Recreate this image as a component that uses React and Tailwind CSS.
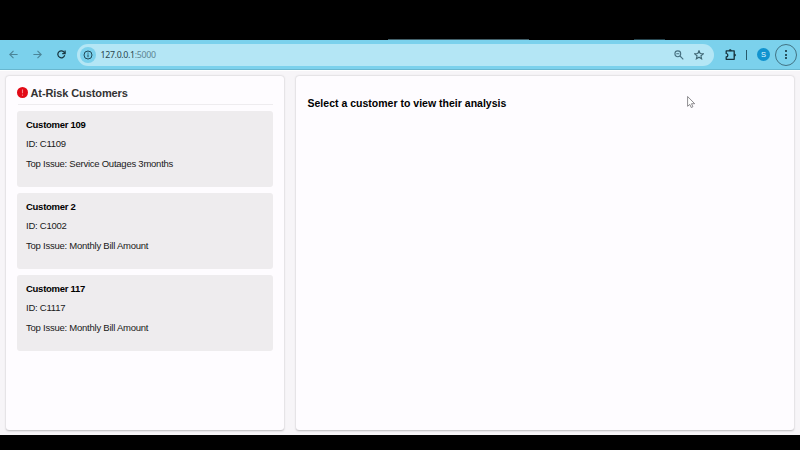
const customers = [
  { name: 'Customer 109', id: 'C1109', issue: 'Service Outages 3months' },
  { name: 'Customer 2', id: 'C1002', issue: 'Monthly Bill Amount' },
  { name: 'Customer 117', id: 'C1117', issue: 'Monthly Bill Amount' },
];

function Arrow({ flip }) {
  return (
    <svg className={flip ? 'h-[9px] w-[9px] rotate-180' : 'h-[9px] w-[9px]'} viewBox="0 0 9 9" fill="none" stroke="#4b8598" strokeWidth="1.1">
      <path d="M8.6 4.5H.9M4.5.8.8 4.5l3.7 3.7" />
    </svg>
  );
}

function BrowserBar() {
  return (
    <header className="flex h-[30px] shrink-0 items-center border-b border-[#68b7cf] bg-[#7bd1ec] pl-[9px] pr-[3px]">
      <Arrow />
      <span className="ml-[15px] flex"><Arrow flip /></span>
      <svg className="ml-[15px] h-[9px] w-[9px]" viewBox="0 0 9 9" fill="none" stroke="#183640" strokeWidth="1.25">
        <path d="M7.7 5.3A3.5 3.5 0 1 1 7.3 2.4L8 3.3" />
        <path d="M8.1.5v3H5.2" />
      </svg>
      <div className="ml-[11px] flex h-[22px] w-[637px] items-center rounded-full bg-[#b4e6f5] pl-[3px] pr-[10px]">
        <span className="flex h-4 w-4 items-center justify-center rounded-full bg-[#7bd1ec]">
          <svg className="h-[10px] w-[10px]" viewBox="0 0 10 10" fill="none" stroke="#254b58" strokeWidth="1">
            <circle cx="5" cy="5" r="4" />
            <path d="M5 4.4v2.8M5 2.6v1" />
          </svg>
        </span>
        <span className="ml-[4.5px] pt-px font-['Noto_Sans',sans-serif] text-[8.8px] leading-none tracking-[-0.33px] text-[#294650]">
          127.0.0.1<span className="text-[#5c8593]">:5000</span>
        </span>
        <svg className="ml-auto h-[10px] w-[10px]" viewBox="0 0 10 10" fill="none" stroke="#477080" strokeWidth="1.1">
          <circle cx="3.8" cy="3.8" r="2.9" />
          <path d="M6 6l3.3 3.3M2.3 3.8h3" />
        </svg>
        <svg className="ml-[10px] h-[10px] w-[10px]" viewBox="0 0 10 10" fill="none" stroke="#3f6673" strokeWidth="1.1">
          <path d="M5 .7l1.2 2.8 3.1.3-2.35 2 .7 3L5 7.2 2.35 8.8l.7-3L.7 3.8l3.1-.3z" />
        </svg>
      </div>
      <svg className="ml-[11px] h-[12px] w-[12px]" viewBox="0 0 12 12" fill="none" stroke="#16323c" strokeWidth="1.3" strokeLinejoin="round">
        <path d="M1.2 1.9h8v8.4h-8V8c2.2-.3 2.2-3.3 0-3.6z" />
        <path d="M4 1.7a1.2 1.2 0 0 1 2.4 0zM9.4 4.9a1.2 1.2 0 0 1 0 2.4z" fill="#16323c" strokeWidth=".6" />
      </svg>
      <span className="ml-[9px] h-[10px] w-px bg-[#285a6b]" />
      <span className="ml-[10px] flex h-[13px] w-[13px] items-center justify-center rounded-full bg-[#1193cf] font-['Liberation_Sans',sans-serif] text-[7.5px] leading-none text-[#e2f7ff]">S</span>
      <span className="ml-auto flex h-[22px] w-[22px] flex-col items-center justify-center gap-[1.5px] rounded-full border-[1.5px] border-[#427384]">
        <span className="h-[2px] w-[2px] rounded-full bg-[#0e2832]" />
        <span className="h-[2px] w-[2px] rounded-full bg-[#0e2832]" />
        <span className="h-[2px] w-[2px] rounded-full bg-[#0e2832]" />
      </span>
    </header>
  );
}

function CustomerCard({ customer }) {
  return (
    <article className="-ml-[0.5px] h-[76px] rounded-[3px] bg-[#eeecee] px-[9px] pt-[9px] text-[9.5px] leading-[10px] tracking-[-0.24px] text-[#191919]">
      <h3 className="font-bold tracking-[-0.27px] text-black">{customer.name}</h3>
      <p className="mt-[9px]">ID: {customer.id}</p>
      <p className="mt-[10px]">Top Issue: {customer.issue}</p>
    </article>
  );
}

export default function App() {
  return (
    <div className="relative flex h-[450px] w-[800px] flex-col overflow-hidden bg-black font-['Liberation_Sans',Arial,sans-serif]">
      <div className="flex h-10 shrink-0 items-end">
        <span className="ml-[388px] h-px w-[141px] bg-[#42606a]" />
        <span className="ml-[105px] h-px w-[31px] bg-[#26454f]" />
      </div>
      <BrowserBar />
      <main className="flex h-[365px] shrink-0 gap-3 border-t border-white bg-[#f7f5f8] px-[6px] pb-[5px] pt-[5px]">
        <section className="w-[278px] rounded-[3px] bg-[#fefcff] px-[11.5px] shadow-[0_0.5px_2px_rgba(0,0,0,0.25)]">
          <div className="flex h-[29px] items-center border-b border-[#eeecef] pt-[5px]">
            <svg className="-ml-[0.5px] h-[11px] w-[11px]" viewBox="0 0 11 11">
              <circle cx="5.5" cy="5.5" r="5.5" fill="#e20a17" />
              <path d="M5.5 2.5v3.7M5.5 7.4v1.3" stroke="#f5858c" strokeWidth="1.1" />
            </svg>
            <h2 className="ml-[2.5px] pt-px text-[11px] font-bold leading-none tracking-[-0.1px] text-[#333]">At-Risk Customers</h2>
          </div>
          <div className="mt-[6px] flex flex-col gap-[6px]">
            {customers.map((customer) => (
              <CustomerCard key={customer.id} customer={customer} />
            ))}
          </div>
        </section>
        <section className="flex-1 rounded-[3px] bg-[#fefcff] px-[11.5px] pt-[21px] shadow-[0_0.5px_2px_rgba(0,0,0,0.25)]">
          <h2 className="text-[10.5px] font-bold leading-[13px] tracking-[0.01px] text-black">Select a customer to view their analysis</h2>
        </section>
      </main>
      <svg className="absolute left-[687px] top-[96px] h-[12px] w-[9px]" viewBox="0 0 9 12" fill="#fff" stroke="#716f73" strokeWidth=".8">
        <path d="M.6.5v9.8l2.2-1.9 1.4 3.1 1.7-.7-1.4-3.1h3.2z" />
      </svg>
    </div>
  );
}
